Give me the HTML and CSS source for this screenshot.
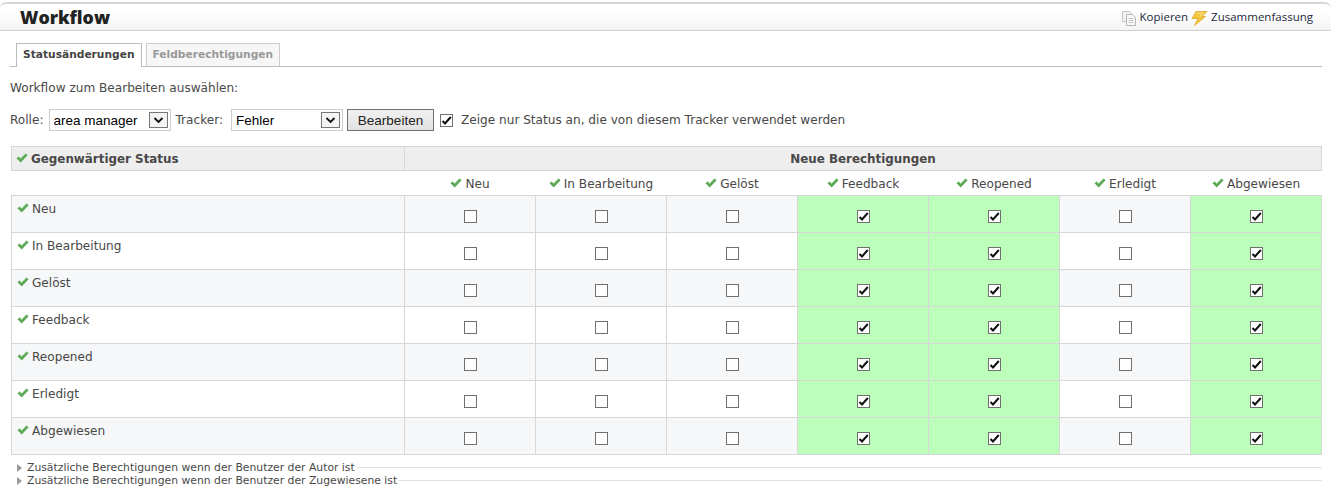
FILE: index.html
```html
<!DOCTYPE html>
<html lang="de">
<head>
<meta charset="utf-8">
<title>Workflow</title>
<link rel="stylesheet" href="styles.css">
</head>
<body>
<svg class="defs" width="0" height="0" aria-hidden="true">
  <symbol id="ok" viewBox="0 0 12 10">
    <path d="M.5 5.200 2.600 3.400 4.600 5.400 9.600.6 11.600 2.200 4.700 9.400Z" fill="#5aa855"/>
    <path d="M.8 5.200 2.600 3.600 4.600 5.600 9.600.8" fill="none" stroke="#9ad494" stroke-width=".8"/>
  </symbol>
</svg>
<header class="topbar">
  <h1 class="title">Workflow</h1>
  <nav class="actions">
    <a class="action">
      <svg class="ico" width="16" height="16" viewBox="0 0 16 16"><path d="M1.500 1.500h7l2 2v8h-9z" fill="#f2f2f2" stroke="#c4c4c4"/><path d="M5.500 4.500h6l3 3v8h-9z" fill="#fafafa" stroke="#b4b4b4"/><path d="M7.500 8.500h5M7.500 10.500h5M7.500 12.500h5" stroke="#c8c8c8"/></svg>
      Kopieren
    </a>
    <a class="action">
      <svg class="ico" width="17" height="15" viewBox="0 0 17 15"><path d="M5 .5h11l-5 5h3.500L3.500 14.500l3.500-7H1z" fill="#f3c63c" stroke="#e0a828" stroke-width=".8" stroke-linejoin="round"/><path d="M6 2h6.500L9 5.500" fill="none" stroke="#fbe68e"/></svg>
      Zusammenfassung
    </a>
  </nav>
</header>
<main class="content">
  <ul class="tabs">
    <li class="tab tab-on">Statusänderungen</li>
    <li class="tab tab-off">Feldberechtigungen</li>
  </ul>
  <p class="lead">Workflow zum Bearbeiten auswählen:</p>
  <form class="filters">
    <label class="flabel">Rolle:</label>
    <select class="sel sel-role"><option>area manager</option></select>
    <label class="flabel">Tracker:</label>
    <select class="sel sel-tracker"><option>Fehler</option></select>
    <button type="button" class="btn">Bearbeiten</button>
    <input type="checkbox" class="cb cb-filter" checked>
    <span class="flabel only">Zeige nur Status an, die von diesem Tracker verwendet werden</span>
  </form>
  <table class="grid">
    <colgroup><col class="c0"><col class="cn"><col class="cn"><col class="cn"><col class="cn"><col class="cn"><col class="cn"><col class="cn"></colgroup>
    <thead>
      <tr class="h1">
        <th class="h-left"><svg class="ok"><use href="#ok"/></svg>Gegenwärtiger Status</th>
        <th colspan="7">Neue Berechtigungen</th>
      </tr>
      <tr class="h2" id="h2"><td></td></tr>
    </thead>
    <tbody id="rows"></tbody>
  </table>
  <div class="fold"><span class="tri"></span><span class="fold-t">Zusätzliche Berechtigungen wenn der Benutzer der Autor ist</span><span class="rule"></span></div>
  <div class="fold"><span class="tri"></span><span class="fold-t">Zusätzliche Berechtigungen wenn der Benutzer der Zugewiesene ist</span><span class="rule"></span></div>
</main>
<script src="app.js"></script>
</body>
</html>
```
FILE: styles.css
```css
* { box-sizing: border-box; }
html, body { margin: 0; padding: 0; background: #fff; }
body { font: 12.100px "DejaVu Sans", Verdana, sans-serif; color: #484848; overflow: hidden; height: 497px; }
.defs { display: block; height: 0; }
.topbar {
  margin-top: 2px; height: 29px; display: flex; justify-content: space-between; align-items: center;
  padding: 0 18px 0 20px;
  border-top: 2px solid #d8d8d8; border-bottom: 1px solid #cfcfcf; border-top-left-radius: 6px; border-top-right-radius: 6px;
  background: linear-gradient(#fff 30%, #f4f4f4);
}
.title { margin: 0; font: 800 17.700px "Open Sans", sans-serif; color: #222; }
.actions { display: flex; gap: 4px; font: 11.500px "Open Sans", sans-serif; color: #1c2a40; margin-top: -2px; }
.action { display: flex; align-items: center; gap: 3px; }
.ico { margin: 4px 0 0 -1px; }
.content { padding: 0 9px 0 10px; }
.tabs { list-style: none; margin: 12px 0 0; padding: 0 0 0 6px; display: flex; gap: 4px; border-bottom: 1px solid #bbb; height: 24px; }
.tab { height: 23px; padding: 0 6px; font: bold 10.660px/22px "DejaVu Sans", sans-serif; border: 1px solid #ccc; border-bottom: 0; }
.tab-on { height: 24px; background: #fff; color: #444; border-color: #bbb; }
.tab-off { background: #f6f6f6; color: #999; }
.lead { margin: 14px 0 0; line-height: 15px; }
.filters { display: flex; align-items: center; height: 22px; margin-top: 13px; }
.flabel { line-height: 20px; }
.sel {
  appearance: none; height: 22px; margin: 0 5px; padding: 1px 4px; font: 13.500px "Liberation Sans", sans-serif; color: #000;
  border: 1px solid #ccc; border-radius: 0; background: #fff url("data:image/svg+xml,%3Csvg xmlns='http://www.w3.org/2000/svg' width='19' height='16'%3E%3Crect x='.5' y='.5' width='18' height='15' fill='%23f4f4f4' stroke='%23777'/%3E%3Cpath d='M5.500 6l4 4 4-4' fill='none' stroke='%23111' stroke-width='1.800'/%3E%3C/svg%3E") no-repeat right 2px center;
}
.sel-role { width: 122px; }
.sel-tracker { width: 112px; margin-left: 8px; margin-right: 4px; }
.btn { width: 87px; height: 22px; padding: 0; font: 13.500px "Liberation Sans", sans-serif; color: #222; background: linear-gradient(#f0f0f0, #e2e2e2); border: 1px solid #707070; }
.cb {
  appearance: none; display: block; width: 13px; height: 13px; margin: 0; border: 1px solid #707070; background: #fff;
}
.cb:checked { background: #fff url("data:image/svg+xml,%3Csvg xmlns='http://www.w3.org/2000/svg' width='11' height='11'%3E%3Cpath d='M1.500 6l2.500 2.500L9.800 2' fill='none' stroke='%23111' stroke-width='2'/%3E%3C/svg%3E") no-repeat center; }
.cb-filter { margin: 0 8px 0 6px; }
.only { margin-left: 0; }
.grid { table-layout: fixed; width: 1311px; margin: 15px 0 0 1px; border-collapse: collapse; }
.c0 { width: 393px; }
.cn { width: 131px; }
.grid th, .grid td { border: 1px solid #d7d7d7; padding: 0; }
.h1 th { height: 24px; background: #eee; font-weight: bold; color: #484848; text-align: center; font-size: 11.900px; }
.h1 .h-left { text-align: left; padding-left: 4px; }
.h2 td { height: 25px; text-align: center; background: #fff; border-left: 0; border-right: 0; padding-top: 2px; }
.ok { width: 12px; height: 10px; margin-right: 3px; vertical-align: 0; }
.row td { height: 37px; text-align: center; }
.row .name { text-align: left; vertical-align: top; padding: 6px 0 0 5px; }
.row:nth-child(odd) td { background: #f6f7f8; }
.row:nth-child(even) td { background: #fff; }
.row td.on { background: #bbffbb; }
.row .cb { margin: 4px auto 0; }
.fold { display: flex; align-items: center; height: 13px; width: 1312px; font-size: 10.800px; color: #484848; padding-left: 7px; }
.fold:first-of-type { margin-top: 6px; }
.tri { width: 0; height: 0; border-left: 5px solid #999; border-top: 4px solid transparent; border-bottom: 4px solid transparent; margin-right: 5px; }
.rule { flex: 1; height: 1px; background: #e2e2e2; margin-left: 2px; }
```
FILE: app.js
```js
var names = ["Neu", "In Bearbeitung", "Gelöst", "Feedback", "Reopened", "Erledigt", "Abgewiesen"];
var on = [0, 0, 0, 1, 1, 0, 1];
var ok = '<svg class="ok"><use href="#ok"/></svg>';
document.getElementById("h2").innerHTML = "<td></td>" + names.map(function (n) { return "<td>" + ok + n + "</td>"; }).join("");
document.getElementById("rows").innerHTML = names.map(function (n) {
  return '<tr class="row"><td class="name">' + ok + n + "</td>" + on.map(function (v) {
    return '<td class="' + (v ? "on" : "") + '"><input type="checkbox" class="cb"' + (v ? " checked" : "") + "></td>";
  }).join("") + "</tr>";
}).join("");
```
